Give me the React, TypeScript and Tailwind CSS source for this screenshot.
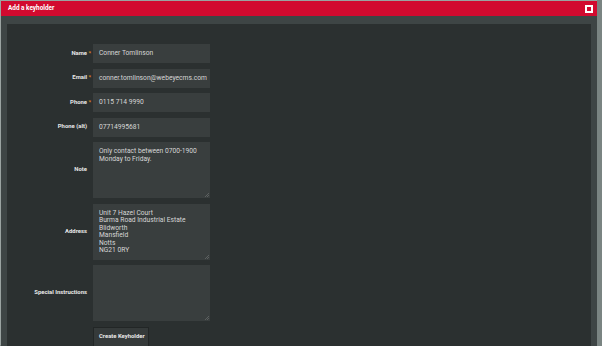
import React from "react";

const font = { fontFamily: "Roboto, 'Liberation Sans', sans-serif" };

function Label({ text, required }: { text: string; required?: boolean }) {
  return (
    <div className="w-[80px] shrink-0 flex items-center justify-end">
      <span className="relative text-[5.9px] font-bold text-[#e8e8e8] leading-none">
        {text}
        {required && (
          <span className="absolute left-full ml-[1.5px] top-0 text-[#e0891f]">*</span>
        )}
      </span>
    </div>
  );
}

function InputRow({ label, value, required }: { label: string; value: string; required?: boolean }) {
  return (
    <div className="flex h-[19px]">
      <Label text={label} required={required} />
      <div className="ml-[6px] w-[117px] h-full bg-[#393e3e] flex items-center px-[6px] text-[6.7px] text-[#d6d6d6] whitespace-nowrap overflow-hidden">
        {value}
      </div>
    </div>
  );
}

function AreaRow({ label, lines }: { label: string; lines: string[] }) {
  return (
    <div className="flex h-[56px]">
      <Label text={label} />
      <div className="ml-[6px] w-[117px] h-full bg-[#393e3e] relative px-[6px] pt-[6px] text-[6.7px] leading-[7.5px] text-[#d6d6d6]">
        {lines.map((l, i) => (
          <div key={i} className="whitespace-nowrap">{l}</div>
        ))}
        <svg className="absolute right-[1px] bottom-[1px]" width="4" height="4" viewBox="0 0 4 4">
          <path d="M4 0 L0 4 M4 2 L2 4" stroke="#6b7070" strokeWidth="0.7" />
        </svg>
      </div>
    </div>
  );
}

export default function App() {
  return (
    <div className="w-[602px] h-[346px] bg-[#7a8482] overflow-hidden" style={font}>
      <div className="w-[597px] h-[345px] border-l border-t border-[#9aa3a1] flex flex-col">
        <div className="h-[15px] bg-[#d20a2f] flex items-center justify-between pl-[7px] pr-[4px] shrink-0">
          <span className="text-[6.4px] font-bold text-white leading-none">Add a keyholder</span>
          <div className="w-[8px] h-[8px] bg-white flex items-center justify-center">
            <div className="w-[4px] h-[4px] bg-[#d20a2f]" />
          </div>
        </div>
        <div className="flex-1 bg-[#3e4545] pl-[6px] pr-[6px] pt-[8px] flex">
          <div className="flex-1 bg-[#2b3030] pt-[20px] flex flex-col gap-[5.5px]">
            <InputRow label="Name" value="Conner Tomlinson" required />
            <InputRow label="Email" value="conner.tomlinson@webeyecms.com" required />
            <InputRow label="Phone" value="0115 714 9990" required />
            <InputRow label="Phone (alt)" value="07714995681" />
            <AreaRow label="Note" lines={["Only contact between 0700-1900", "Monday to Friday."]} />
            <AreaRow
              label="Address"
              lines={["Unit 7 Hazel Court", "Burma Road Industrial Estate", "Blidworth", "Mansfield", "Notts", "NG21 0RY"]}
            />
            <AreaRow label="Special Instructions" lines={[]} />
            <div className="flex">
              <div className="w-[86px] shrink-0" />
              <div className="h-[20px] w-[56px] px-[5px] bg-[#353a3a] border border-[#222626] flex items-center text-[5.9px] font-bold text-[#e8e8e8] whitespace-nowrap">
                Create Keyholder
              </div>
            </div>
          </div>
        </div>
      </div>
    </div>
  );
}
